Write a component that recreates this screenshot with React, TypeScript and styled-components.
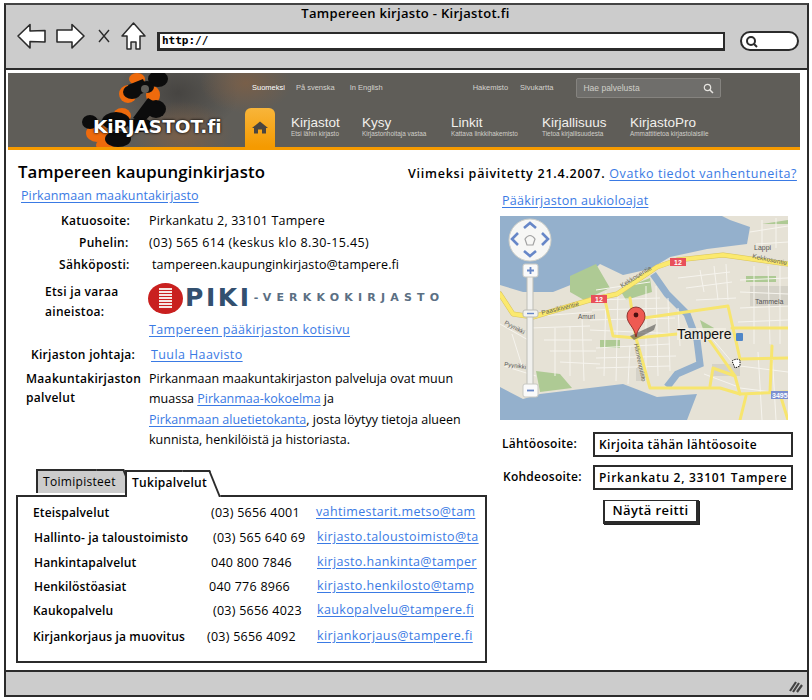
import React from "react";
import styled, { createGlobalStyle } from "styled-components";

const Global = createGlobalStyle`
  html, body { margin: 0; padding: 0; background: #fff; }
  body { font-family: "Open Sans", "Noto Sans", sans-serif; color: #000; }
`;

const ink = "#2b2b2b";
const linkBlue = "#3a7ae4";

const Frame = styled.div`
  box-sizing: border-box;
  width: 805px;
  height: 694px;
  margin: 3px 0 0 4px;
  border: 2px solid ${ink};
  border-top-color: #444;
  display: flex;
  flex-direction: column;
  background: #fff;
`;
const Toolbar = styled.header`
  box-sizing: border-box;
  height: 65px;
  flex: none;
  background: #cccccc;
  border-bottom: 2px solid ${ink};
  display: flex;
  flex-direction: column;
`;
const WindowTitle = styled.div`
  height: 17px;
  padding-top: 1px;
  padding-right: 2px;
  box-sizing: border-box;
  line-height: 15px;
  text-align: center;
  font-size: 13px;
  font-weight: 600;
  letter-spacing: 0.3px;
`;
const NavRow = styled.div`
  display: flex;
  align-items: flex-start;
  padding-left: 11px;
`;
const NavIcon = styled.svg<{ $gap: number; $top: number }>`
  flex: none;
  margin-left: ${(p) => p.$gap}px;
  margin-top: ${(p) => p.$top}px;
  overflow: visible;
`;
const UrlBox = styled.div`
  box-sizing: border-box;
  width: 568px;
  height: 19px;
  margin: 10px 0 0 11px;
  background: #fff;
  border: 2px solid ${ink};
  border-width: 2px 2px 3px 3px;
  font-family: "DejaVu Sans Mono", monospace;
  font-size: 11px;
  line-height: 14px;
  font-weight: 600;
  padding-left: 2px;
`;
const SearchPill = styled.div`
  box-sizing: border-box;
  width: 59px;
  height: 20px;
  margin: 9px 0 0 15px;
  border: 2px solid ${ink};
  border-radius: 10px;
  background: #fff;
  display: flex;
  align-items: center;
  padding-left: 3px;
`;
const Page = styled.main`
  flex: 1;
  min-height: 0;
  display: flex;
  flex-direction: column;
`;
const Banner = styled.div`
  position: relative;
  box-sizing: border-box;
  flex: none;
  width: 792px;
  height: 77px;
  margin: 3px 0 0 2px;
  border-bottom: 3px solid #f59a00;
  overflow: hidden;
  background:
    radial-gradient(ellipse 50px 34px at 174px 62px, rgba(125, 95, 70, 0.85), rgba(95, 93, 88, 0) 100%),
    radial-gradient(ellipse 46px 30px at 238px 10px, rgba(125, 95, 70, 0.85), rgba(95, 93, 88, 0) 100%),
    radial-gradient(ellipse 60px 44px at 170px 20px, rgba(60, 58, 56, 0.7), rgba(95, 93, 88, 0) 100%),
    #5f5d58;
`;
const BlobArt = styled.svg`
  position: absolute;
  left: 0;
  top: 0;
`;
const LogoText = styled.div`
  position: absolute;
  left: 85px;
  top: 42px;
  color: #fff;
  font-family: "DejaVu Sans", sans-serif;
  font-weight: 700;
  font-size: 18.5px;
  line-height: 24px;
  letter-spacing: -0.05px;
  text-shadow: 0 0 3px #000, 0 0 1px #000;
`;
const BannerInner = styled.div`
  position: relative;
  padding-left: 237px;
  display: flex;
  flex-direction: column;
  font-family: "Liberation Sans", sans-serif;
  color: #dedcd8;
`;
const TopLinks = styled.div`
  height: 35px;
  display: flex;
  align-items: flex-start;
  font-size: 7.5px;
`;
const TopLink = styled.span<{ $x: number; $bright?: boolean }>`
  margin-left: ${(p) => p.$x}px;
  margin-top: 10px;
  line-height: 10px;
  color: ${(p) => (p.$bright ? "#fff" : "#d4d2ce")};
  white-space: nowrap;
`;
const SiteSearch = styled.div`
  box-sizing: border-box;
  width: 145px;
  height: 20px;
  margin: 5px 0 0 23px;
  padding: 0 6px 0 6px;
  background: #6f6e6b;
  border: 1px solid #85837f;
  border-radius: 2px;
  display: flex;
  align-items: center;
  justify-content: space-between;
  font-size: 8.5px;
  color: #d0cec9;
`;
const MainNav = styled.nav`
  display: flex;
  align-items: flex-start;
`;
const HomeTab = styled.div`
  width: 30px;
  height: 39px;
  margin-right: 16px;
  border-radius: 6px 6px 0 0;
  background: linear-gradient(#f8b53a, #f59a00);
  display: flex;
  align-items: center;
  justify-content: center;
`;
const NavItem = styled.div<{ $w: number }>`
  width: ${(p) => p.$w}px;
  flex: none;
  padding-top: 8px;
`;
const NavTitle = styled.div`
  font-size: 13.5px;
  line-height: 14px;
  color: #f2f0ec;
`;
const NavSub = styled.div`
  font-size: 6.4px;
  line-height: 7px;
  color: #d0cec9;
  white-space: nowrap;
`;
const Content = styled.div`
  flex: 1;
  min-height: 0;
  padding-left: 12px;
  font-size: 12.5px;
`;
const HeadRow = styled.div`
  display: flex;
  align-items: baseline;
  height: 24px;
  margin-top: 9px;
`;
const PageTitle = styled.h1`
  margin: 0;
  width: 390px;
  font-size: 16.8px;
  font-weight: 600;
  line-height: 25px;
  letter-spacing: 0.1px;
  white-space: nowrap;
`;
const Updated = styled.div`
  font-size: 12.5px;
  font-weight: 600;
  letter-spacing: 0.75px;
  white-space: nowrap;
`;
const Link = styled.a<{ $spacing?: number; $size?: number }>`
  color: ${linkBlue};
  text-decoration: underline;
  text-underline-offset: 2px;
  font-weight: 400;
  font-size: ${(p) => p.$size ?? 12.5}px;
  letter-spacing: ${(p) => p.$spacing ?? 0}px;
  white-space: nowrap;
`;
const Columns = styled.div`
  display: grid;
  grid-template-columns: 482px 300px;
`;
const LeftColumn = styled.section``;
const RightColumn = styled.section`
  padding-top: 6px;
`;
const TopLinkRow = styled.div<{ $x: number; $h: number; $y?: number }>`
  padding-left: ${(p) => p.$x}px;
  padding-top: ${(p) => p.$y ?? 0}px;
  height: ${(p) => p.$h}px;
  box-sizing: border-box;
  line-height: 24px;
`;
const Field = styled.div<{ $h?: number; $mt?: number }>`
  display: grid;
  grid-template-columns: 131px 1fr;
  min-height: ${(p) => p.$h ?? 22}px;
  margin-top: ${(p) => p.$mt ?? 0}px;
  line-height: 22px;
`;
const FieldLabel = styled.div<{ $x: number; $lh?: number }>`
  padding-left: ${(p) => p.$x}px;
  font-weight: 600;
  font-size: 12px;
  letter-spacing: 0.3px;
  line-height: ${(p) => p.$lh ?? 22}px;
  white-space: nowrap;
`;
const FieldValue = styled.div<{ $x?: number; $lh?: number; $spacing?: number; $size?: number }>`
  padding-left: ${(p) => p.$x ?? 0}px;
  font-size: ${(p) => p.$size ?? 12.5}px;
  letter-spacing: ${(p) => p.$spacing ?? 0}px;
  line-height: ${(p) => p.$lh ?? 22}px;
  white-space: nowrap;
`;
const Piki = styled.div`
  display: flex;
  align-items: center;
  gap: 2px;
  height: 32px;
  margin-left: -1px;
`;
const PikiWord = styled.span`
  font-family: "DejaVu Sans", sans-serif;
  font-weight: 700;
  font-size: 25px;
  line-height: 30px;
  letter-spacing: 2.6px;
  color: #33506f;
`;
const PikiTail = styled.span`
  font-family: "DejaVu Sans", sans-serif;
  font-weight: 700;
  font-size: 11px;
  letter-spacing: 5.2px;
  color: #5b6f83;
`;
const Tabs = styled.div`
  display: flex;
  align-items: flex-end;
  height: 28px;
  margin-top: 16px;
  padding-left: 18px;
`;
const Tab = styled.div<{ $active?: boolean }>`
  position: relative;
  box-sizing: border-box;
  width: ${(p) => (p.$active ? 79 : 82)}px;
  height: ${(p) => (p.$active ? 27 : 24)}px;
  margin-right: ${(p) => (p.$active ? 0 : 7)}px;
  margin-bottom: ${(p) => (p.$active ? -2 : 2)}px;
  padding-left: 5px;
  background: ${(p) => (p.$active ? "#fff" : "#cccccc")};
  border-top: 2px solid ${ink};
  border-left: 2px solid ${ink};
  z-index: ${(p) => (p.$active ? 2 : 1)};
  line-height: 22px;
  font-size: 12px;
  font-weight: ${(p) => (p.$active ? 600 : 400)};
  letter-spacing: 0.3px;
  white-space: nowrap;
  &::after {
    content: "";
    position: absolute;
    z-index: -1;
    top: -2px;
    right: -6px;
    bottom: 0;
    width: 26px;
    background: ${(p) => (p.$active ? "#fff" : "#cccccc")};
    border-right: 2px solid ${ink};
    border-top: 2px solid ${ink};
    transform: skewX(22deg);
    transform-origin: top left;
  }
`;
const Panel = styled.div`
  box-sizing: border-box;
  width: 471px;
  height: 168px;
  margin-left: -2px;
  padding: 3px 0 0 15px;
  border: 2px solid ${ink};
`;
const ServiceRow = styled.div<{ $h: number }>`
  display: grid;
  grid-template-columns: 178px 105px 156px;
  height: ${(p) => p.$h}px;
  align-items: center;
`;
const ServiceName = styled.div<{ $x?: number }>`
  padding-left: ${(p) => p.$x ?? 0}px;
  font-size: 12px;
  font-weight: 600;
  letter-spacing: 0.15px;
  white-space: nowrap;
`;
const ServicePhone = styled.div<{ $x: number }>`
  margin-left: ${(p) => p.$x}px;
  font-size: 12.5px;
  letter-spacing: 0.25px;
  white-space: nowrap;
`;
const ServiceMail = styled.div<{ $x: number }>`
  padding-left: ${(p) => p.$x}px;
  white-space: nowrap;
  padding-bottom: 2px;
`;
const MapBox = styled.svg`
  display: block;
  width: 288px;
  height: 204px;
  margin-top: 3px;
`;
const RouteRow = styled.div<{ $mt: number }>`
  display: grid;
  grid-template-columns: 93px 200px;
  align-items: center;
  margin-top: ${(p) => p.$mt}px;
`;
const RouteLabel = styled.div<{ $x: number }>`
  padding-left: ${(p) => p.$x}px;
  padding-bottom: 2px;
  font-size: 12px;
  font-weight: 600;
  letter-spacing: 0.25px;
  white-space: nowrap;
`;
const RouteInput = styled.div<{ $spacing: number }>`
  box-sizing: border-box;
  height: 25px;
  padding-left: 4px;
  border: 2px solid ${ink};
  font-size: 12px;
  font-weight: 600;
  letter-spacing: ${(p) => p.$spacing}px;
  line-height: 21px;
  white-space: nowrap;
  overflow: hidden;
`;
const RouteButton = styled.div`
  box-sizing: border-box;
  width: 96px;
  height: 24px;
  margin: 10px 0 0 103px;
  border: 2px solid ${ink};
  border-width: 1px 3px 3px 2px;
  box-shadow: 1px 1px 0 #222;
  text-align: center;
  font-size: 13px;
  font-weight: 600;
  letter-spacing: 0.4px;
  line-height: 19px;
`;
const StatusBar = styled.footer`
  box-sizing: border-box;
  height: 25px;
  flex: none;
  background: #cccccc;
  border-top: 2px solid ${ink};
  display: flex;
  justify-content: flex-end;
  align-items: flex-end;
  padding: 0 4px 2px 0;
`;

const services = [
  { h: 25, name: "Eteispalvelut", nx: 0, phone: "(03) 5656 4001", px: 0, mx: 0, mail: "vahtimestarit.metso@tam" },
  { h: 25, name: "Hallinto- ja taloustoimisto", nx: 1, phone: "(03) 565 640 69", px: 2, mx: 1, mail: "kirjasto.taloustoimisto@ta" },
  { h: 25, name: "Hankintapalvelut", nx: 1, phone: "040 800 7846", px: 0, mx: 1, mail: "kirjasto.hankinta@tamper" },
  { h: 24, name: "Henkilöstöasiat", nx: 1, phone: "040 776 8966", px: -2, mx: 1, mail: "kirjasto.henkilosto@tamp" },
  { h: 24, name: "Kaukopalvelu", nx: 0, phone: "(03) 5656 4023", px: 2, mx: 1, mail: "kaukopalvelu@tampere.fi" },
  { h: 27, name: "Kirjankorjaus ja muovitus", nx: 0, phone: "(03) 5656 4092", px: -4, mx: 1, mail: "kirjankorjaus@tampere.fi" },
];

const navItems = [
  { w: 71, t: "Kirjastot", s: "Etsi lähin kirjasto" },
  { w: 89, t: "Kysy", s: "Kirjastonhoitaja vastaa" },
  { w: 91, t: "Linkit", s: "Kattava linkkihakemisto" },
  { w: 88, t: "Kirjallisuus", s: "Tietoa kirjallisuudesta" },
  { w: 100, t: "KirjastoPro", s: "Ammattitietoa kirjastolaisille" },
];

const thinRoads = [
  "M96 74 L150 66 M96 84 L160 82 M92 94 L170 92 M90 104 L175 102 M90 114 L180 118 M96 132 L170 128 M96 142 L176 140 M96 152 L170 150",
  "M106 76 L104 160 M118 76 L116 165 M130 130 L128 168 M146 70 L146 165 M156 70 L158 160 M168 82 L170 155 M178 92 L180 130",
  "M40 100 L92 96 M30 112 L90 110 M44 124 L92 124 M50 135 L96 135 M60 146 L100 148 M70 110 L70 160 M82 100 L84 165 M55 112 L55 160",
  "M178 62 L230 56 M186 72 L232 66 M196 84 L236 82 M200 54 L204 76 M214 50 L218 84 M226 48 L228 84",
  "M240 64 L288 62 M240 76 L288 78 M240 92 L288 90 M254 50 L254 128 M268 50 L270 128 M280 50 L280 128 M238 106 L288 104",
  "M250 16 L288 10 M256 28 L288 26 M262 4 L262 34 M276 2 L276 32",
  "M0 108 L30 125 M4 150 L36 160 M12 118 L22 150 M210 120 L232 146 M204 158 L236 170",
  "M240 150 L288 156 M240 172 L288 178 M258 136 L262 204 M272 136 L276 204",
];

const MapDrawing = () => (
  <MapBox viewBox="0 0 288 204" role="img" aria-label="Kartta">
    <rect width="288" height="204" fill="#e6e2d6" />
    <path d="M0 0 H222 L230 4 L250 11 L247 28 L207 33 L170 41 L150 53 L123 59 L100 48 L83 64 L53 76 L23 76 L0 69 Z" fill="#94b0cc" />
    <path d="M0 171 L23 183 L40 178 L73 174 L123 168 L157 181 L197 178 L187 204 H0 Z" fill="#94b0cc" />
    <path d="M153 58 L167 78 L187 98 L197 124 L200 148 L177 158 L167 171" fill="none" stroke="#94b0cc" strokeWidth="7" />
    <path d="M70 60 L96 48 L110 72 L84 84 L70 76 Z M120 74 L150 62 L152 76 L126 84 Z" fill="#aeca94" />
    <path d="M100 124 H120 V132 H100 Z M36 155 L60 158 L72 172 L40 176 Z M200 104 L214 112 L210 126 L204 116 Z M262 8 L288 4 V8 Z M246 60 H276 V66 H246 Z" fill="#aeca94" />
    <path d="M250 70 H288 V90 H250 Z M212 148 H240 V160 H212 Z M136 152 H146 V165 H136 Z" fill="#d5d2c8" />
    <g fill="none" stroke="#f6f4ee" strokeWidth="1">
      {thinRoads.map((d) => (
        <path key={d} d={d} />
      ))}
    </g>
    <g fill="none" strokeLinejoin="round" strokeLinecap="round">
      <g stroke="#d9c45a" strokeWidth="5">
        <path d="M0 78 L13 98 L33 101 L90 84 L117 78 L157 51 L177 44 L223 39 L288 48" />
      </g>
      <g stroke="#fbe96e" strokeWidth="4">
        <path d="M0 78 L13 98 L33 101 L90 84 L117 78 L157 51 L177 44 L223 39 L288 48" />
      </g>
      <g stroke="#f7e56e" strokeWidth="3">
        <path d="M105 84 L113 120 L136 122 L177 118 M130 82 L136 122 L150 172 L220 172 L240 178 L288 176" />
        <path d="M144 102 L228 90 L240 143 L288 142 M232 112 L288 112 M208 122 L235 160 L240 178 M235 160 L213 152 L210 170 M272 130 L270 176 M280 178 L288 204 M246 180 L240 204" />
      </g>
    </g>
    <rect x="170" y="42" width="16" height="8" fill="#e8505a" />
    <text x="178" y="49" fontSize="7" fontWeight="700" fill="#fff" textAnchor="middle" fontFamily="Liberation Sans">12</text>
    <rect x="91" y="79" width="16" height="8" fill="#e8505a" />
    <text x="99" y="86" fontSize="7" fontWeight="700" fill="#fff" textAnchor="middle" fontFamily="Liberation Sans">12</text>
    <rect x="271" y="175" width="17" height="8" fill="#7b8fd0" />
    <text x="272" y="182" fontSize="7" fontWeight="700" fill="#fff" fontFamily="Liberation Sans">3495</text>
    <g fontFamily="Liberation Sans" fill="#555">
      <text x="254" y="34" fontSize="7">Lappi</text>
      <text x="255" y="88" fontSize="7">Tammela</text>
      <text x="78" y="103" fontSize="6.5">Amuri</text>
      <text x="4" y="150" fontSize="6" transform="rotate(8 4 150)">Pyynikki</text>
      <text x="4" y="108" fontSize="6" transform="rotate(28 4 108)">Pyynikki</text>
      <text x="42" y="99" fontSize="6.5" transform="rotate(-14 42 99)" fill="#665">Paasikiventie</text>
      <text x="122" y="72" fontSize="6.5" transform="rotate(-32 122 72)" fill="#665">Kekkosentie</text>
      <text x="252" y="42" fontSize="6.5" transform="rotate(12 252 42)" fill="#665">Kekkosentie</text>
      <text x="134" y="128" fontSize="6" transform="rotate(78 134 128)" fill="#665">Hämeenpuisto</text>
    </g>
    <rect x="177" y="112" width="49" height="12" fill="#f3efe4" opacity="0.8" />
    <text x="177" y="123" fontSize="14" fill="#111" fontFamily="Liberation Sans">Tampere</text>
    <rect x="236" y="117" width="7" height="8" rx="1" fill="#4f86c8" />
    <path d="M130 120 L156 108 L154 114 L134 124 Z" fill="#444" opacity="0.55" />
    <path d="M136 121 C134 110 127 108 127 100 A9 9 0 0 1 145 100 C145 108 138 110 136 121 Z" fill="#ee5a52" stroke="#7a1f1c" strokeWidth="0.8" />
    <circle cx="136" cy="99" r="2.4" fill="#4a1010" />
    <circle cx="30" cy="24" r="21" fill="#f7f7f5" stroke="#cfcfc8" />
    <path d="M24 12 L30 7 L36 12 M24 35 L30 40 L36 35 M18 17 L12 23 L18 29 M42 17 L48 23 L42 29" fill="none" stroke="#6787c8" strokeWidth="2.6" />
    <path d="M25 23 Q30 16 35 23 L33 29 H27 Z" fill="none" stroke="#a2a2a2" strokeWidth="1.2" />
    <rect x="27" y="56" width="6" height="118" fill="#f1f1ee" stroke="#bdbdb6" />
    <rect x="23" y="48" width="15" height="13" rx="2" fill="#fafafa" stroke="#c8c8c2" />
    <path d="M27 54.5 H34 M30.5 51 V58" stroke="#6787c8" strokeWidth="1.8" />
    <rect x="23" y="94" width="15" height="7" rx="2" fill="#f3f3f0" stroke="#bcbcb6" />
    <path d="M27 97.5 H34" stroke="#6787c8" strokeWidth="1.4" />
    <rect x="23" y="168" width="15" height="13" rx="2" fill="#fafafa" stroke="#c8c8c2" />
    <path d="M27 174.5 H34" stroke="#6787c8" strokeWidth="1.8" />
    <path d="M232 145 Q236 142 240 144 L240 150 L235 152 Z" fill="#fff" stroke="#111" strokeWidth="1" strokeDasharray="1.5 1" />
  </MapBox>
);

export default function App() {
  return (
    <>
      <Global />
      <Frame>
        <Toolbar>
          <WindowTitle>Tampereen kirjasto - Kirjastot.fi</WindowTitle>
          <NavRow>
            <NavIcon $gap={0} $top={1} width="29" height="26" viewBox="0 0 29 26">
              <path d="M1 13 L13 1.5 L13 8 L28 7.5 L28 19 L13 18.5 L13 25 Z" fill="#fff" stroke={ink} strokeWidth="1.6" strokeLinejoin="round" />
            </NavIcon>
            <NavIcon $gap={10} $top={1} width="29" height="26" viewBox="0 0 29 26">
              <path d="M28 13 L16 1.5 L16 7 L1 7 L1 19 L16 19 L16 25 Z" fill="#fff" stroke={ink} strokeWidth="1.6" strokeLinejoin="round" />
            </NavIcon>
            <NavIcon $gap={13} $top={7} width="12" height="14" viewBox="0 0 12 14">
              <path d="M1 1 L11 13 M11 1 L1 13" stroke={ink} strokeWidth="1.4" fill="none" />
            </NavIcon>
            <NavIcon $gap={11} $top={0} width="25" height="28" viewBox="0 0 25 28">
              <path d="M12.5 1 L24 14 L19 14 L19 27 L15 27 L15 20 L10 20 L10 27 L6 27 L6 14 L1 14 Z" fill="#fff" stroke={ink} strokeWidth="1.5" strokeLinejoin="round" />
            </NavIcon>
            <UrlBox>http://</UrlBox>
            <SearchPill>
              <svg width="13" height="13" viewBox="0 0 13 13">
                <circle cx="6" cy="6" r="4" fill="none" stroke={ink} strokeWidth="2" />
                <path d="M9 9 L12 12" stroke={ink} strokeWidth="2" />
              </svg>
            </SearchPill>
          </NavRow>
        </Toolbar>
        <Page>
          <Banner>
            <BlobArt width="240" height="77" viewBox="0 0 240 77">
              <g fill="#ee6a0c">
                <ellipse cx="129" cy="6" rx="8" ry="6" />
                <ellipse cx="120" cy="21" rx="9" ry="9" />
                <ellipse cx="145" cy="22" rx="7" ry="9" />
                <ellipse cx="114" cy="43" rx="9" ry="8" />
                <ellipse cx="89" cy="60" rx="11" ry="9" />
                <ellipse cx="97" cy="72" rx="9" ry="6" />
              </g>
              <g fill="#0c0c0c">
                <ellipse cx="150" cy="6" rx="10" ry="8" />
                <ellipse cx="124" cy="19" rx="9" ry="7" />
                <ellipse cx="148" cy="36" rx="10" ry="9" />
                <ellipse cx="139" cy="14" rx="7" ry="6" />
                <ellipse cx="108" cy="48" rx="14" ry="9" />
                <ellipse cx="82" cy="49" rx="8" ry="7" />
                <ellipse cx="132" cy="52" rx="12" ry="7" />
                <ellipse cx="110" cy="66" rx="13" ry="8" />
                <path d="M140 25 L125 45 L135 50 L152 32 Z M120 12 L135 6 L140 18 L126 24 Z" />
              </g>
              <circle cx="137" cy="16" r="4" fill="#5f5d58" />
            </BlobArt>
            <LogoText>KiRJASTOT.fi</LogoText>
            <BannerInner>
              <TopLinks>
                <TopLink $x={7} $bright>Suomeksi</TopLink>
                <TopLink $x={11}>På svenska</TopLink>
                <TopLink $x={15}>In English</TopLink>
                <TopLink $x={90}>Hakemisto</TopLink>
                <TopLink $x={12}>Sivukartta</TopLink>
                <SiteSearch>
                  Hae palvelusta
                  <svg width="11" height="11" viewBox="0 0 11 11">
                    <circle cx="4.5" cy="4.5" r="3.2" fill="none" stroke="#e6e4e0" strokeWidth="1.2" />
                    <path d="M7 7 L10 10" stroke="#e6e4e0" strokeWidth="1.5" />
                  </svg>
                </SiteSearch>
              </TopLinks>
              <MainNav>
                <HomeTab>
                  <svg width="16" height="13" viewBox="0 0 16 13">
                    <path d="M8 0.5 L16 7 L14 7 L14 12.5 L10 12.5 L10 8.5 L6 8.5 L6 12.5 L2 12.5 L2 7 L0 7 Z" fill="#4a4540" />
                  </svg>
                </HomeTab>
                {navItems.map((n) => (
                  <NavItem key={n.t} $w={n.w}>
                    <NavTitle>{n.t}</NavTitle>
                    <NavSub>{n.s}</NavSub>
                  </NavItem>
                ))}
              </MainNav>
            </BannerInner>
          </Banner>
          <Content>
            <HeadRow>
              <PageTitle>Tampereen kaupunginkirjasto</PageTitle>
              <Updated>
                Viimeksi päivitetty 21.4.2007. <Link $spacing={0.55}>Ovatko tiedot vanhentuneita?</Link>
              </Updated>
            </HeadRow>
            <Columns>
              <LeftColumn>
                <TopLinkRow $x={3} $h={27} $y={1}>
                  <Link $spacing={0.1}>Pirkanmaan maakuntakirjasto</Link>
                </TopLinkRow>
                <Field>
                  <FieldLabel $x={43}>Katuosoite:</FieldLabel>
                  <FieldValue $spacing={0.2}>Pirkankatu 2, 33101 Tampere</FieldValue>
                </Field>
                <Field>
                  <FieldLabel $x={61}>Puhelin:</FieldLabel>
                  <FieldValue $spacing={0.4}>(03) 565 614 (keskus klo 8.30-15.45)</FieldValue>
                </Field>
                <Field>
                  <FieldLabel $x={41}>Sähköposti:</FieldLabel>
                  <FieldValue $x={3} $spacing={0.08}>tampereen.kaupunginkirjasto@tampere.fi</FieldValue>
                </Field>
                <Field $mt={6} $h={40}>
                  <FieldLabel $x={27} $lh={20}>
                    Etsi ja varaa
                    <br />
                    aineistoa:
                  </FieldLabel>
                  <FieldValue>
                    <Piki>
                      <svg width="35" height="31" viewBox="0 0 35 31">
                        <ellipse cx="17.5" cy="15.5" rx="17.5" ry="15.5" fill="#c9201f" />
                        <g fill="#f6e6e2">
                          {[5, 8, 11, 14, 17, 20, 23].map((y) => (
                            <rect key={y} x="11" y={y} width="13" height="2" />
                          ))}
                        </g>
                      </svg>
                      <PikiWord>PIKI</PikiWord>
                      <PikiTail>-VERKKOKIRJASTO</PikiTail>
                    </Piki>
                  </FieldValue>
                </Field>
                <Field $h={22} $mt={-3}>
                  <span />
                  <FieldValue>
                    <Link $spacing={0.35}>Tampereen pääkirjaston kotisivu</Link>
                  </FieldValue>
                </Field>
                <Field $mt={3}>
                  <FieldLabel $x={13}>Kirjaston johtaja:</FieldLabel>
                  <FieldValue $x={2}>
                    <Link $spacing={0.4}>Tuula Haavisto</Link>
                  </FieldValue>
                </Field>
                <Field $mt={3}>
                  <FieldLabel $x={8} $lh={19}>
                    Maakuntakirjaston
                    <br />
                    palvelut
                  </FieldLabel>
                  <FieldValue $lh={20.4}>
                    Pirkanmaan maakuntakirjaston palveluja ovat muun
                    <br />
                    muassa <Link>Pirkanmaa-kokoelma</Link> ja
                    <br />
                    <Link>Pirkanmaan aluetietokanta</Link>, josta löytyy tietoja alueen
                    <br />
                    kunnista, henkilöistä ja historiasta.
                  </FieldValue>
                </Field>
                <Tabs>
                  <Tab>Toimipisteet</Tab>
                  <Tab $active>Tukipalvelut</Tab>
                </Tabs>
                <Panel>
                  {services.map((s) => (
                    <ServiceRow key={s.name} $h={s.h}>
                      <ServiceName $x={s.nx}>{s.name}</ServiceName>
                      <ServicePhone $x={s.px}>{s.phone}</ServicePhone>
                      <ServiceMail $x={s.mx}>
                        <Link $spacing={0.36}>{s.mail}</Link>
                      </ServiceMail>
                    </ServiceRow>
                  ))}
                </Panel>
              </LeftColumn>
              <RightColumn>
                <TopLinkRow $x={2} $h={24}>
                  <Link $spacing={0.3}>Pääkirjaston aukioloajat</Link>
                </TopLinkRow>
                <MapDrawing />
                <RouteRow $mt={12}>
                  <RouteLabel $x={2}>Lähtöosoite:</RouteLabel>
                  <RouteInput $spacing={0.4}>Kirjoita tähän lähtöosoite</RouteInput>
                </RouteRow>
                <RouteRow $mt={8}>
                  <RouteLabel $x={3}>Kohdeosoite:</RouteLabel>
                  <RouteInput $spacing={0.72}>Pirkankatu 2, 33101 Tampere</RouteInput>
                </RouteRow>
                <RouteButton>Näytä reitti</RouteButton>
              </RightColumn>
            </Columns>
          </Content>
        </Page>
        <StatusBar>
          <svg width="14" height="14" viewBox="0 0 14 14">
            <path d="M1 12 L7 3 M4 13 L10 4 M8 13 L13 6" stroke="#444" strokeWidth="2.2" fill="none" />
          </svg>
        </StatusBar>
      </Frame>
    </>
  );
}
